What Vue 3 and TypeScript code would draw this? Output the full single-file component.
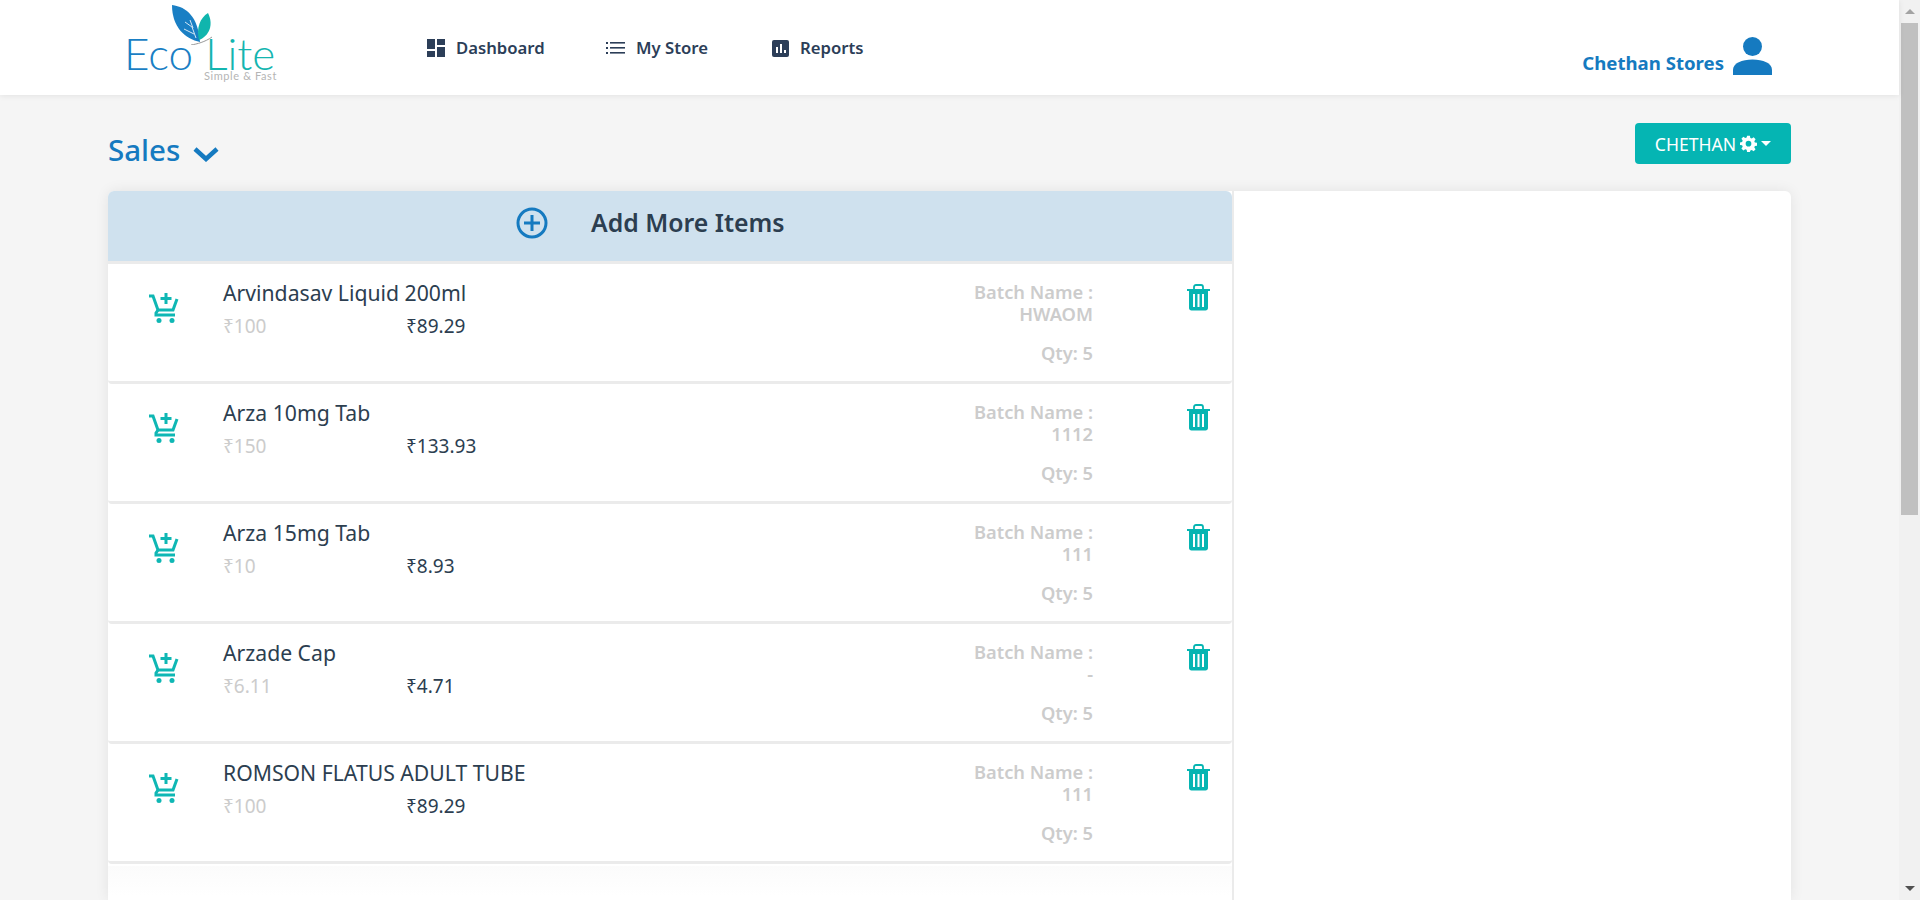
<script setup lang="ts">
interface SaleItem {
  name: string
  mrp: string
  price: string
  batch: string
}

const items: SaleItem[] = [
  { name: 'Arvindasav Liquid 200ml', mrp: '100', price: '89.29', batch: 'HWAOM' },
  { name: 'Arza 10mg Tab', mrp: '150', price: '133.93', batch: '1112' },
  { name: 'Arza 15mg Tab', mrp: '10', price: '8.93', batch: '111' },
  { name: 'Arzade Cap', mrp: '6.11', price: '4.71', batch: '-' },
  { name: 'ROMSON FLATUS ADULT TUBE', mrp: '100', price: '89.29', batch: '111' },
]
</script>

<template>
  <div class="shell">
    <div class="page">
      <header class="topbar">
        <div class="logo">
          <svg class="logo-leaves" width="44" height="40" viewBox="0 0 44 40">
            <path d="M1 0C16 2 27 12 29 37 14 34 1 22 1 0Z" fill="#1a7fc4" />
            <path d="M28 35C25 23 29 13 37 8 43 20 38 31 28 35Z" fill="#10b5ad" />
            <g stroke="#d5e8f5" stroke-width="1" fill="none">
              <path d="M14 17 21 22 25 33M19 15 22 23M13 24 23 29" />
            </g>
            <path d="M20 40C26 39 34 37 41 32" stroke="#999" stroke-width="1" fill="none" />
          </svg>
          <div class="logo-word"><span class="eco">Eco</span> <span class="lite">Lite</span></div>
          <div class="logo-sub">Simple &amp; Fast</div>
        </div>
        <nav class="nav">
          <a class="nav-link nav-dash">
            <svg width="18" height="18" viewBox="0 0 18 18" fill="#2c3e58">
              <rect x="0" y="0" width="8" height="10" />
              <rect x="10" y="0" width="8" height="6" />
              <rect x="0" y="12" width="8" height="6" />
              <rect x="10" y="8" width="8" height="10" />
            </svg>
            Dashboard
          </a>
          <a class="nav-link nav-store">
            <svg width="19" height="16" viewBox="0 0 19 16" fill="#2c3e58">
              <rect x="0" y="2" width="2" height="2" />
              <rect x="0" y="7" width="2" height="2" />
              <rect x="0" y="12" width="2" height="2" />
              <rect x="4" y="2" width="15" height="1.6" />
              <rect x="4" y="7" width="15" height="1.6" />
              <rect x="4" y="12" width="15" height="1.6" />
            </svg>
            My Store
          </a>
          <a class="nav-link nav-reports">
            <svg width="17" height="17" viewBox="0 0 17 17">
              <rect width="17" height="17" rx="2" fill="#2c3e58" />
              <rect x="4" y="7" width="2" height="6" fill="#fff" />
              <rect x="8" y="4" width="2" height="9" fill="#fff" />
              <rect x="12" y="10" width="2" height="3" fill="#fff" />
            </svg>
            Reports
          </a>
        </nav>
        <div class="account">
          <span class="account-name">Chethan Stores</span>
          <svg width="39" height="39" viewBox="0 0 39 39" fill="#157ac0">
            <ellipse cx="19.5" cy="9.5" rx="9.5" ry="9.5" />
            <path d="M0 38V33C0 26 9 22.500 19.500 22.500S39 26 39 33V38Z" />
          </svg>
        </div>
      </header>

      <main class="content">
        <div class="title-row">
          <h1 class="title">
            Sales
            <svg width="26" height="16" viewBox="0 0 26 16" fill="none" stroke="#157ac0" stroke-width="4.500">
              <path d="M2 3 13 13 24 3" />
            </svg>
          </h1>
          <button class="user-btn">
            CHETHAN
            <svg width="17" height="17" viewBox="0 0 24 24" fill="#fff">
              <path fill-rule="evenodd" d="M10 1h4l.6 3.200 2 .8L19.300 3.200 22 6l-1.800 2.700.8 2L24 11v4l-3 .5-.8 2L22 20l-2.700 2.800-2.700-1.800-2 .8L14 24h-4l-.6-3.200-2-.8L4.700 22 2 19.200l1.800-2.700-.8-2L0 14v-3.500l3-.6.8-2L2 5.200 4.700 2.400l2.700 1.800 2-.8ZM12 8.200a4 4 0 1 0 0 8 4 4 0 0 0 0-8Z" />
            </svg>
            <span class="caret"></span>
          </button>
        </div>

        <section class="board">
          <div class="list">
            <div class="add-bar">
              <svg class="add-icon" width="32" height="32" viewBox="0 0 32 32" fill="none" stroke="#157ac0">
                <circle cx="16" cy="16" r="14" stroke-width="3" />
                <path d="M16 8V24M8 16H24" stroke-width="3" />
              </svg>
              <span class="add-label">Add More Items</span>
            </div>

            <article v-for="item in items" :key="item.name" class="row">
              <svg class="cart" width="30" height="31" viewBox="0 0 30 31" fill="none" stroke="#0fb7b4" stroke-width="3">
                <path d="M0 4H4L9 18H24L28 7" />
                <path d="M9 18 7 21V23H26" />
                <path d="M17 1V12M11.500 6.500H22.500" />
                <circle cx="10" cy="28.500" r="2.500" fill="#0fb7b4" stroke="none" />
                <circle cx="23" cy="28.500" r="2.500" fill="#0fb7b4" stroke="none" />
              </svg>
              <div class="info">
                <div class="name">{{ item.name }}</div>
                <div class="prices">
                  <span class="mrp">₹{{ item.mrp }}</span>
                  <span class="price">₹{{ item.price }}</span>
                </div>
              </div>
              <div class="batch">
                <div>Batch Name :</div>
                <div>{{ item.batch }}</div>
                <div class="qty">Qty: 5</div>
              </div>
              <svg class="trash" width="23" height="27" viewBox="0 0 23 27" fill="#06b5b2">
                <path d="M0 5H23V7H0Z" />
                <path d="M7 5V3C7 1.500 8 1 9 1H14C15 1 16 1.500 16 3V5" fill="none" stroke="#06b5b2" stroke-width="1.800" />
                <path fill-rule="evenodd" d="M2 7H21V24C21 25.500 20 26.500 18.500 26.500H4.500C3 26.500 2 25.500 2 24ZM6 10V23H8V10ZM10.500 10V23H12.500V10ZM15 10V23H17V10Z" />
              </svg>
            </article>
            <div class="list-tail"></div>
          </div>
          <div class="side"></div>
        </section>
      </main>
    </div>

    <aside class="scrollbar">
      <span class="arrow arrow-up"></span>
      <div class="track"><div class="thumb"></div></div>
      <span class="arrow arrow-down"></span>
    </aside>
  </div>
</template>

<style>
html, body {
  margin: 0;
  overflow: hidden;
}
</style>

<style scoped>
.shell {
  display: flex;
  height: 900px;
  overflow: hidden;
  font-family: 'Noto Sans', 'Open Sans', sans-serif;
  color: #2c3e50;
}

.page {
  flex: 1;
  min-width: 0;
  background: #f5f5f5;
  display: flex;
  flex-direction: column;
}

.topbar {
  height: 95px;
  flex: none;
  box-sizing: border-box;
  background: #fff;
  box-shadow: 0 1px 6px rgba(0, 0, 0, 0.08);
  display: flex;
  position: relative;
}

.logo {
  position: relative;
  width: 152px;
  margin-left: 125px;
  height: 95px;
  flex: none;
}

.logo-leaves {
  position: absolute;
  left: 46px;
  top: 5px;
}

.logo-word {
  position: absolute;
  left: -1px;
  top: 36px;
  font-family: Lato, sans-serif;
  font-weight: 300;
  font-size: 44px;
  line-height: 34px;
  white-space: nowrap;
}

.eco {
  color: #1a7fc4;
}

.lite {
  color: #14b5b0;
}

.logo-sub {
  position: absolute;
  right: 0;
  top: 70px;
  font-family: Lato, sans-serif;
  font-size: 11px;
  line-height: 12px;
  color: #b5b5b5;
  letter-spacing: 0.6px;
}

.nav {
  display: flex;
  align-items: flex-start;
  padding-top: 36px;
  margin-left: 150px;
}

.nav-link {
  display: flex;
  align-items: center;
  gap: 11px;
  font-size: 16.700px;
  font-weight: 600;
  line-height: 24px;
  color: #2c3e58;
}

.nav-dash {
  width: 179px;
}

.nav-store {
  width: 166px;
}

.account {
  margin-left: auto;
  margin-right: 127px;
  display: flex;
  align-items: flex-start;
  align-self: flex-start;
  gap: 9px;
  padding-top: 37px;
  font-size: 18.600px;
  font-weight: 700;
  color: #157ac0;
}

.account-name {
  margin-top: 13px;
}

.content {
  flex: 1;
  min-height: 0;
  display: flex;
  flex-direction: column;
  padding: 28px 108px 0;
}

.title-row {
  display: flex;
  justify-content: space-between;
  align-items: flex-start;
  height: 68px;
  flex: none;
}

.title {
  margin: 0;
  display: flex;
  align-items: center;
  gap: 13px;
  font-size: 29.500px;
  line-height: 54px;
  font-weight: 500;
  color: #157ac0;
}

.title svg {
  margin-top: 8px;
}

.user-btn {
  width: 156px;
  height: 41px;
  border: 0;
  border-radius: 4px;
  background: #05b5b3;
  color: #fff;
  font: 400 17.600px 'Noto Sans', sans-serif;
  display: flex;
  align-items: center;
  justify-content: center;
  gap: 4px;
  padding: 0;
}

.caret {
  width: 0;
  height: 0;
  border-left: 5px solid transparent;
  border-right: 5px solid transparent;
  border-top: 5px solid #fff;
}

.board {
  flex: 1;
  min-height: 0;
  display: flex;
  background: #fff;
  border-radius: 6px 6px 0 0;
  box-shadow: 0 0 14px rgba(0, 0, 0, 0.08);
  overflow: hidden;
}

.list {
  width: 1124px;
  flex: none;
  border-right: 2px solid #ebebeb;
}

.side {
  flex: 1;
}

.add-bar {
  height: 70px;
  background: #cfe1ee;
  border-bottom: 3px solid #ebebeb;
  border-radius: 0 6px 0 0;
  display: flex;
  align-items: flex-start;
  padding-left: 408px;
}

.add-icon {
  margin-top: 16px;
}

.add-label {
  margin-left: 43px;
  font-size: 24.800px;
  line-height: 34px;
  font-weight: 600;
  color: #2c3e50;
  margin-top: 14px;
}

.row {
  height: 117px;
  border-bottom: 3px solid #ebebeb;
  border-radius: 0 0 4px 4px;
  display: flex;
  align-items: flex-start;
}

.cart {
  flex: none;
  margin: 28px 0 0 41px;
}

.info {
  flex: 1;
  padding: 14px 0 0 44px;
}

.name {
  font-size: 21.200px;
  line-height: 30px;
  color: #2c3e50;
}

.prices {
  display: flex;
  font-size: 19px;
  line-height: 26px;
  margin-top: 5px;
}

.mrp {
  width: 183px;
  color: #ccc;
}

.price {
  color: #2c3e50;
}

.batch {
  width: 140px;
  flex: none;
  padding-top: 17px;
  text-align: right;
  font-size: 18.300px;
  font-weight: 600;
  line-height: 22px;
  color: #ccc;
}

.qty {
  margin-top: 17px;
}

.trash {
  flex: none;
  margin: 20px 22px 0 94px;
}

.list-tail {
  height: 30px;
  margin-top: 2px;
  background: linear-gradient(#fbfbfb, #fff);
}

.scrollbar {
  width: 21px;
  flex: none;
  background: #f1f1f1;
  display: flex;
  flex-direction: column;
  align-items: center;
}

.track {
  flex: 1;
  width: 100%;
  padding: 0 2px;
  box-sizing: border-box;
}

.thumb {
  height: 492px;
  background: #c0c0c0;
}

.arrow {
  width: 0;
  height: 0;
  flex: none;
  border-left: 5px solid transparent;
  border-right: 5px solid transparent;
}

.arrow-up {
  margin: 9px 0;
  border-bottom: 5px solid #a3a3a3;
}

.arrow-down {
  margin: 9px 0;
  border-top: 5px solid #505050;
}
</style>
